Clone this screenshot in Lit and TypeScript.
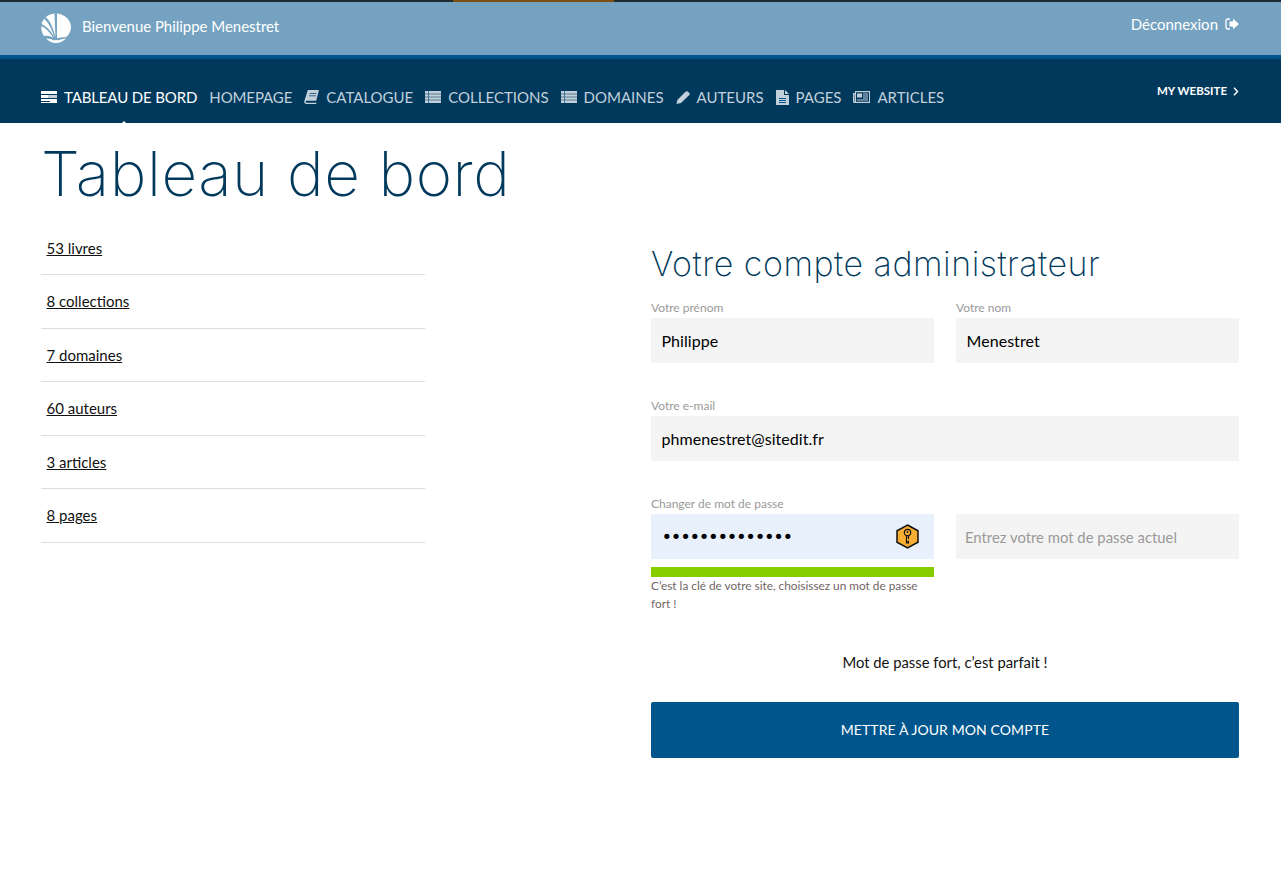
import { LitElement, html, css, svg } from "lit";
import { customElement } from "lit/decorators.js";

const listIcon = svg`<svg class="ic" width="16" height="12" viewBox="0 0 16 12"><path fill="currentColor" d="M0 0h16v12H0z"/><path stroke="#00395c" stroke-opacity=".7" stroke-width=".8" d="M0 3h16M0 6h16M0 9h16M3.500 0v12"/></svg>`;
const dashIcon = svg`<svg class="ic" width="16" height="12" viewBox="0 0 16 12"><path fill="#fff" d="M0 0h16v3H0zM0 4h7v3H0zM0 8h16v4H0z"/><path fill="#c6d0d8" d="M7 4h9v3H7z"/><path stroke="#00395c" d="M0 10.500h9"/></svg>`;
const bookIcon = svg`<svg class="ic" width="15" height="14" viewBox="0 0 15 14"><path fill="currentColor" d="M3.800 0H15l-2.800 10.800H3c-.8 0-1.300.4-1.300 1s.5 1 1.300 1h9.500l-.3 1.200H2.600C1 14 0 13 .3 11.200z"/><path stroke="#00395c" stroke-width=".7" d="M5.500 3.500h6.800M5 5.800h6.800"/></svg>`;
const pencilIcon = svg`<svg class="ic" width="14" height="13" viewBox="0 0 14 13"><path fill="currentColor" d="M9.500.8c.7-.7 1.500-.7 2.100-.2l1.700 1.500c.6.600.6 1.300 0 1.900L5 12 .5 13 1.300 8.900z"/></svg>`;
const pageIcon = svg`<svg class="ic" width="13" height="15" viewBox="0 0 13 15"><path fill="currentColor" d="M0 0h8v5h5v10H0z"/><path fill="currentColor" d="M9 0l4 4H9z"/><path stroke="#00568c" d="M3 8.500h7M3 10.500h7M3 12.500h7"/></svg>`;
const newsIcon = svg`<svg class="ic" width="17" height="12" viewBox="0 0 17 12"><path fill="currentColor" d="M2 0h15v12H1.500C.6 12 0 11.400 0 10.500V2h2z"/><path fill="#00395c" d="M1 3v7.500c0 .3.500.3.500 0V3zM3 1.300h13v9.400H3z"/><path fill="currentColor" d="M4 2.500h5v4H4zM10 2.500h5v1h-5zM10 4.500h5v1h-5zM10 6.500h5v1h-5zM4 8.500h11v1H4z"/></svg>`;

const nav: [string, unknown][] = [
  ["HOMEPAGE", null],
  ["CATALOGUE", bookIcon],
  ["COLLECTIONS", listIcon],
  ["DOMAINES", listIcon],
  ["AUTEURS", pencilIcon],
  ["PAGES", pageIcon],
  ["ARTICLES", newsIcon],
];
const stats = ["53 livres", "8 collections", "7 domaines", "60 auteurs", "3 articles", "8 pages"];

@customElement("app-root")
export class AppRoot extends LitElement {
  static styles = css`
    :host { display: block; min-height: 877px; background: #fff; font-family: Lato, "Liberation Sans", sans-serif; color: #111; }
    * { box-sizing: border-box; }
    .loader { height: 2px; background: #1f2a33; display: flex; justify-content: flex-start; }
    .loader i { display: block; width: 161px; margin-left: 453px; background: #7d4d12; }
    .top { height: 53px; background: #74a2c0; display: flex; justify-content: space-between; padding: 0 42px 0 41px; color: #fff; }
    .brand { display: flex; align-items: center; gap: 11px; font-size: 15px; padding-bottom: 5px; letter-spacing: -.03px; }
    .brand svg { margin-top: 4px; }
    .logout { display: flex; align-items: flex-start; gap: 7px; padding-top: 13px; font-size: 15px; }
    .logout svg { margin-top: 3px; }
    .stripe { height: 4px; background: #00568c; }
    .nav { height: 64px; background: #00395c; display: flex; justify-content: space-between; padding: 0 42px 0 41px; position: relative; }
    .menu { display: flex; align-items: flex-start; gap: 12px; padding-top: 28px; font-size: 15px; color: #c2d0db; }
    .item { display: flex; align-items: center; gap: 7px; height: 20px; white-space: nowrap; }
    .item.active { color: #fff; letter-spacing: -.13px; }
    .item.tight { letter-spacing: -.1px; }
    .ic { display: block; flex: none; }
    .caret { position: absolute; left: 122px; bottom: 0; width: 0; height: 0; border: 2px solid transparent; border-bottom-color: #fff; border-top: 0; }
    .site { display: flex; align-items: flex-start; gap: 6px; padding-top: 25px; color: #fff; font-size: 11.500px; font-weight: 700; }
    .site svg { margin-top: 3px; }
    .main { padding: 0 42px 0 41px; }
    h1 { margin: 0; height: 99px; padding: 15px 0 0 0; font-size: 62px; line-height: 72px; font-weight: 200; letter-spacing: .55px; color: #00395c; font-family: Inter, Lato, sans-serif; }
    .cols { display: grid; grid-template-columns: 384px 588px; justify-content: space-between; }
    .stats { display: flex; flex-direction: column; margin-top: -.5px; }
    .stat { height: 53.500px; border-bottom: 1px solid #ddd; padding: 17px 0 0 5.500px; font-size: 15px; line-height: 18px; }
    .stat a { color: #111; text-decoration: underline; }
    h2 { margin: 0; height: 76px; padding-top: 21px; font-size: 34px; line-height: 42px; font-weight: 200; letter-spacing: .5px; color: #00395c; font-family: Inter, Lato, sans-serif; }
    .form { display: grid; grid-template-columns: 283px 283px; column-gap: 22px; }
    .field { display: flex; flex-direction: column; }
    .full { grid-column: 1 / 3; }
    label { font-size: 12px; line-height: 14px; color: #999; height: 20px; padding-top: 3px; }
    .input { height: 45px; background: #f4f4f4; padding: 0 10.500px; display: flex; align-items: center; justify-content: space-between; font-size: 16px; color: #000; letter-spacing: .05px; }
    .gap { margin-bottom: 33px; }
    .pw { background: #e8f0fc; padding-right: 15px; }
    .dots { font-size: 18px; letter-spacing: -1.300px; line-height: 1; font-family: "DejaVu Sans", sans-serif; }
    .current { padding-left: 9px; }
    .placeholder { color: #999; font-size: 14.850px; letter-spacing: 0; }
    .bar { height: 10px; margin-top: 8px; background: #85cc00; }
    .hint { margin: 0; font-size: 11.800px; line-height: 18px; color: #706565; }
    .strength { grid-column: 1 / 3; margin-top: 1px; text-align: center; font-size: 14.800px; line-height: 18px; padding-top: 39px; height: 72px; }
    .btn { grid-column: 1 / 3; margin-top: 16px; height: 56px; border: 0; border-radius: 2px; background: #00568c; color: #fff; font: 14px Lato, sans-serif; letter-spacing: .1px; display: flex; align-items: center; justify-content: center; padding: 0 0 2px; }
  `;

  render() {
    return html`
      <div class="loader"><i></i></div>
      <header class="top">
        <div class="brand">
          <svg width="30" height="30" viewBox="0 0 30 30">
            <path fill="#fff" d="M16 0.500c7.500.6 14 6.500 14 13.500 0 4-1.800 7.500-4.700 10-2 .2-5.500.2-9.300 1.300z"/>
            <path fill="#fff" d="M13.500 .6c-3.500.3-6.500 1.700-8.800 3.700C8.500 7 12 14 14.500 24.500z"/>
            <path fill="#fff" d="M3.300 5.800C2 7.300 1 9 .6 11 5.500 13.500 10.500 18 13.300 24.500 11 16 7.500 10 3.300 5.800z"/>
            <path fill="#fff" d="M.3 13C0 16 .7 20 3 23c3-.6 7 .2 9.500 2C9 19.500 5 15.300.3 13z"/>
            <path fill="#fff" d="M5 25.500c3 0 6 .8 8.300 2 1-.5 3-.7 3.700 0 2.500-1 4.500-1.700 8-2-2.500 2.500-6 4.500-10 4.500S7.500 28 5 25.500z"/>
          </svg>
          <span>Bienvenue Philippe Menestret</span>
        </div>
        <div class="logout">
          <span>Déconnexion</span>
          <svg width="14" height="12" viewBox="0 0 14 12"><path fill="none" stroke="#fff" stroke-width="1.300" d="M5 1H3a2 2 0 0 0-2 2v6a2 2 0 0 0 2 2h2"/><path fill="#fff" d="M4.500 3.500H8V.8L14 6 8 11.200V8.500H4.500z"/></svg>
        </div>
      </header>
      <div class="stripe"></div>
      <nav class="nav">
        <div class="menu">
          <div class="item active">${dashIcon}<span>TABLEAU DE BORD</span></div>
          ${nav.map(([t, i], n) => html`<div class="item ${n === 0 ? "tight" : ""}">${i}<span>${t}</span></div>`)}
        </div>
        <i class="caret"></i>
        <div class="site">
          <span>MY WEBSITE</span>
          <svg width="6" height="9" viewBox="0 0 6 9"><path fill="none" stroke="#fff" stroke-width="1.500" d="M1 .8 4.500 4.500 1 8.200"/></svg>
        </div>
      </nav>
      <main class="main">
        <h1>Tableau de bord</h1>
        <div class="cols">
          <div class="stats">
            ${stats.map((s) => html`<div class="stat"><a href="#">${s}</a></div>`)}
          </div>
          <section>
            <h2>Votre compte administrateur</h2>
            <div class="form">
              <div class="field gap"><label>Votre prénom</label><div class="input">Philippe</div></div>
              <div class="field gap"><label>Votre nom</label><div class="input">Menestret</div></div>
              <div class="field gap full"><label>Votre e-mail</label><div class="input">phmenestret@sitedit.fr</div></div>
              <div class="field">
                <label>Changer de mot de passe</label>
                <div class="input pw">
                  <span class="dots">••••••••••••••</span>
                  <svg width="23" height="25" viewBox="0 0 23 25">
                    <path fill="#f9ae34" stroke="#111" stroke-width="1.500" d="M11.500 1 22 6.800v11.400L11.500 24 1 18.200V6.800z"/>
                    <circle cx="11.500" cy="8.500" r="3.200" fill="none" stroke="#111" stroke-width="1.200"/>
                    <circle cx="11.500" cy="8" r=".9" fill="#111"/>
                    <path fill="none" stroke="#111" stroke-width="1.200" d="M10.500 11.800v7h2v-1.500h-1M12.500 11.800v3.200"/>
                  </svg>
                </div>
                <div class="bar"></div>
                <p class="hint">C’est la clé de votre site, choisissez un mot de passe fort !</p>
              </div>
              <div class="field">
                <label></label>
                <div class="input current"><span class="placeholder">Entrez votre mot de passe actuel</span></div>
              </div>
              <div class="strength">Mot de passe fort, c’est parfait !</div>
              <button class="btn">METTRE À JOUR MON COMPTE</button>
            </div>
          </section>
        </div>
      </main>
    `;
  }
}
